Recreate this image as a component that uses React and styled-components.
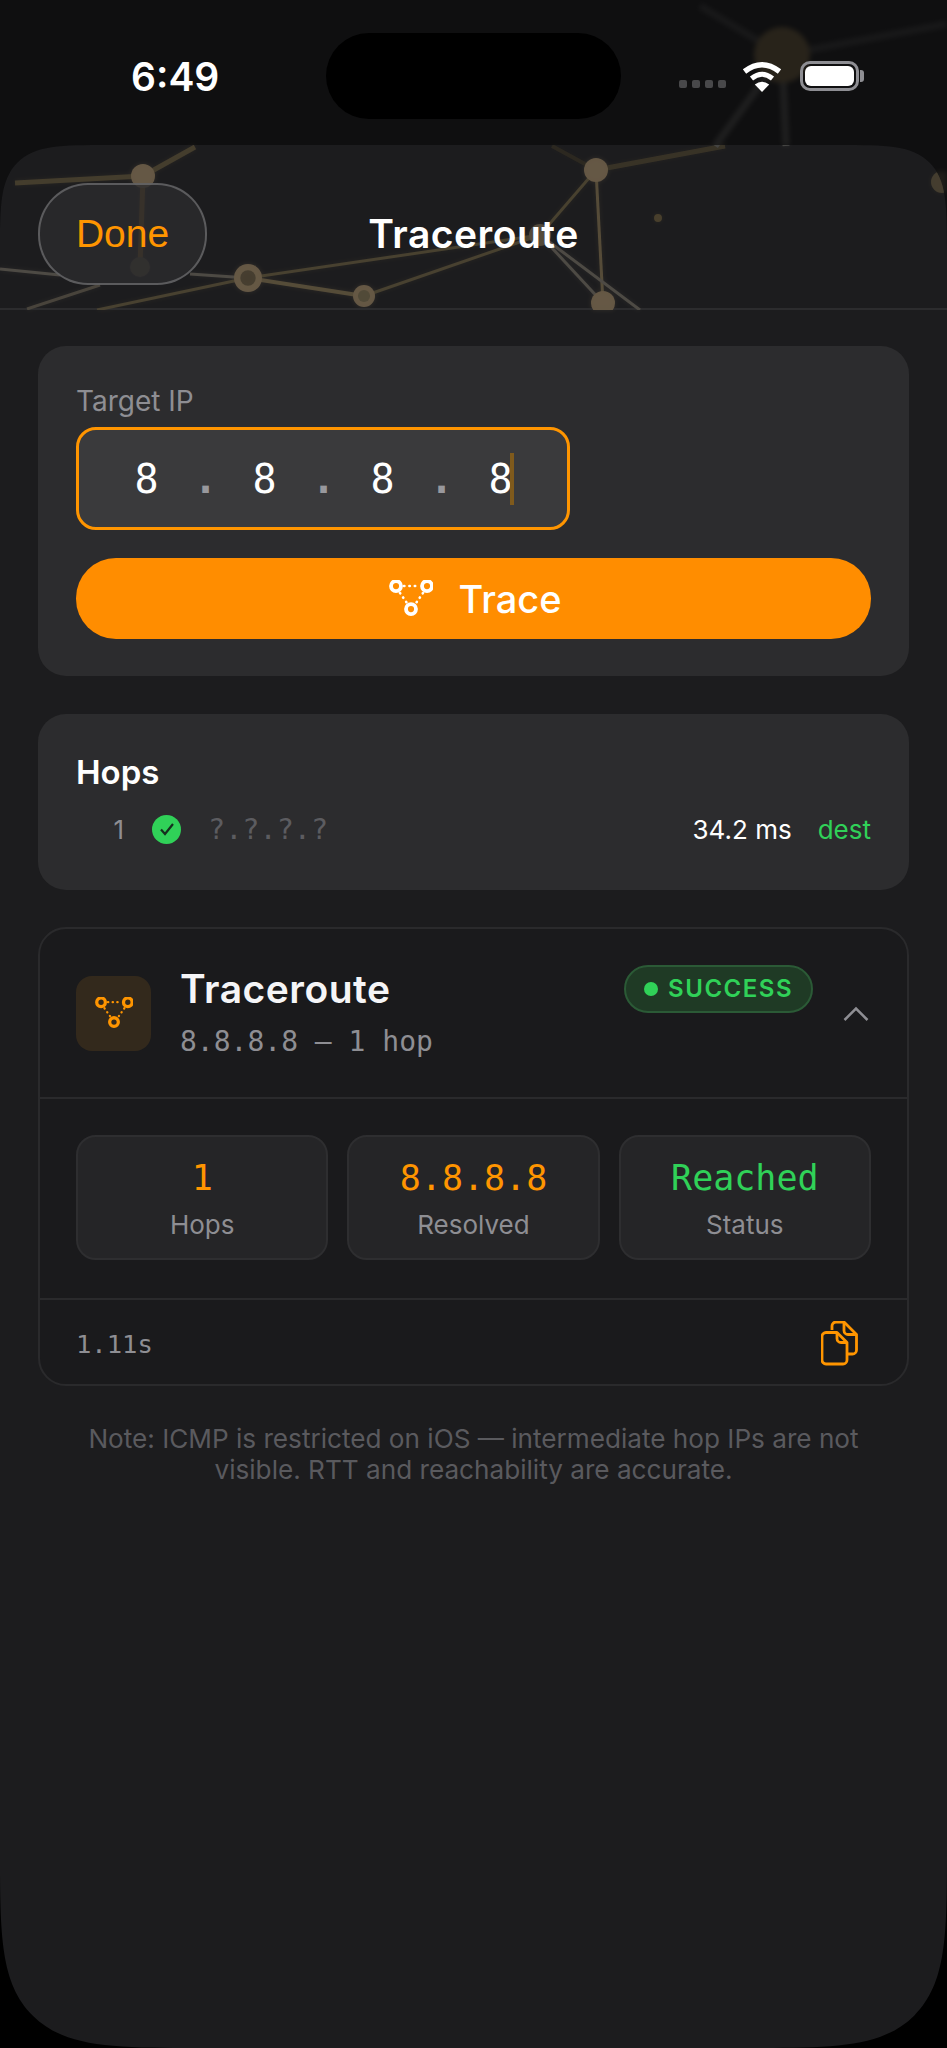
import React from 'react'
import styled, { createGlobalStyle } from 'styled-components'

const ORANGE = '#ff9500'
const GREEN = '#30d158'
const MONO = '"DejaVu Sans Mono", "Liberation Mono", monospace'

const links = [
  [15, 183, 143, 176, 5, '#4a4230'],
  [143, 176, 195, 147, 5, '#4a4230'],
  [143, 176, 140, 267, 5, '#6a4c1c'],
  [0, 269, 60, 275, 3, '#55514a'],
  [190, 274, 248, 278, 3, '#55514a'],
  [100, 285, 27, 309, 3, '#4f4a40'],
  [248, 278, 97, 310, 3, '#4f4733'],
  [248, 278, 364, 296, 4, '#5e533d'],
  [248, 278, 540, 235, 3, '#4f4733'],
  [364, 296, 540, 235, 3, '#4f4733'],
  [540, 235, 596, 170, 3, '#4f4733'],
  [596, 170, 603, 303, 3, '#5e533d'],
  [540, 235, 603, 303, 3, '#55514a'],
  [540, 235, 640, 310, 3, '#55514a'],
  [596, 170, 725, 146, 5, '#3d3729'],
  [596, 170, 552, 146, 4, '#2f2b22'],
  [782, 55, 715, 146, 7, '#4a4a48'],
  [782, 55, 786, 146, 7, '#4a4a48'],
  [782, 55, 700, 6, 7, '#333'],
  [782, 55, 947, 24, 7, '#333'],
]

const nodes = [
  [143, 176, 12, '#6f604a'],
  [140, 267, 10, '#4c4434'],
  [248, 278, 14, '#6f604a', '#4b4232'],
  [364, 296, 11, '#6f604a', '#58503c'],
  [540, 235, 11, '#5a5040'],
  [596, 170, 12, '#6f604a'],
  [603, 303, 12, '#6f604a'],
  [658, 218, 4, '#4f452f'],
  [942, 182, 11, '#4a4232'],
  [782, 55, 28, '#6a5836'],
]

function Network({ $dim, $shift }) {
  return (
    <NetworkSvg $dim={$dim} $shift={$shift} width="947" height="310" viewBox="0 0 947 310">
      {links.map((l, i) => (
        <line key={i} x1={l[0]} y1={l[1]} x2={l[2]} y2={l[3]} stroke={l[5]} strokeWidth={l[4]} />
      ))}
      {nodes.map((n, i) => (
        <g key={i}>
          <circle cx={n[0]} cy={n[1]} r={n[2]} fill={n[3]} />
          {n[4] && <circle cx={n[0]} cy={n[1]} r={n[2] * 0.55} fill={n[4]} />}
        </g>
      ))}
    </NetworkSvg>
  )
}

function TraceIcon({ size, color }) {
  return (
    <svg width={size} height={size * 0.82} viewBox="0 0 44 36" fill="none" stroke={color}>
      <circle cx="7" cy="6" r="5" strokeWidth="3.8" />
      <circle cx="38" cy="6" r="5" strokeWidth="3.8" />
      <circle cx="22" cy="29" r="5" strokeWidth="3.8" />
      <g strokeWidth="2.6" strokeLinecap="round" strokeDasharray="0.4 5">
        <line x1="15" y1="6" x2="31" y2="6" />
        <line x1="11" y1="13" x2="18" y2="23" />
        <line x1="34" y1="13" x2="27" y2="23" />
      </g>
    </svg>
  )
}

function App() {
  return (
    <Phone>
      <GlobalStyle />
      <StatusBar>
        <Network $dim />
        <Time>6:49</Time>
        <Island />
        <StatusIcons>
          <Signal>
            <i /><i /><i /><i />
          </Signal>
          <svg width="40" height="31" viewBox="0 0 40 31" fill="none">
            <path d="M2.5 10.5 Q20 -3 37.5 10.5" stroke="#fff" strokeWidth="5.5" />
            <path d="M9.5 17.5 Q20 9 30.5 17.5" stroke="#fff" strokeWidth="5" />
            <path d="M20 31 L12.8 23.5 Q20 18 27.2 23.5 Z" fill="#fff" />
          </svg>
          <Battery>
            <BatteryFill />
          </Battery>
        </StatusIcons>
      </StatusBar>

      <Sheet>
        <Header>
          <Network $shift={-145} />
          <DoneButton>Done</DoneButton>
          <HeaderTitle>Traceroute</HeaderTitle>
        </Header>

        <Content>
          <Card $pad="38px 38px 37px">
            <FieldLabel>Target IP</FieldLabel>
            <IpField>
              <IpCell>8</IpCell>
              <IpDot>.</IpDot>
              <IpCell>8</IpCell>
              <IpDot>.</IpDot>
              <IpCell>8</IpCell>
              <IpDot>.</IpDot>
              <IpCell>8</IpCell>
              <Caret />
            </IpField>
            <TraceButton>
              <TraceIcon size={44} color="#fff" />
              Trace
            </TraceButton>
          </Card>

          <Card $pad="35px 38px 0" $height="176px">
            <CardTitle>Hops</CardTitle>
            <HopRow>
              <HopNumber>1</HopNumber>
              <CheckDot>
                <svg width="16" height="14" viewBox="0 0 16 14" fill="none">
                  <path d="M2 7.5 L6 12 L14 2" stroke="#16301f" strokeWidth="2.2" />
                </svg>
              </CheckDot>
              <HopAddress>?.?.?.?</HopAddress>
              <HopTime>34.2 ms</HopTime>
              <HopTag>dest</HopTag>
            </HopRow>
          </Card>

          <ResultCard>
            <ResultHeader>
              <IconBox>
                <TraceIcon size={38} color={ORANGE} />
              </IconBox>
              <ResultBody>
                <ResultTop>
                  <ResultTitle>Traceroute</ResultTitle>
                  <Badge>
                    <BadgeDot />
                    SUCCESS
                  </Badge>
                </ResultTop>
                <ResultSub>8.8.8.8 — 1 hop</ResultSub>
              </ResultBody>
              <svg width="26" height="15" viewBox="0 0 26 15" fill="none">
                <path d="M1.5 14 L13 2.5 L24.5 14" stroke="#8e8e93" strokeWidth="2.5" />
              </svg>
            </ResultHeader>

            <Stats>
              <Stat>
                <StatValue $color={ORANGE}>1</StatValue>
                <StatLabel>Hops</StatLabel>
              </Stat>
              <Stat>
                <StatValue $color={ORANGE}>8.8.8.8</StatValue>
                <StatLabel>Resolved</StatLabel>
              </Stat>
              <Stat>
                <StatValue $color={GREEN}>Reached</StatValue>
                <StatLabel>Status</StatLabel>
              </Stat>
            </Stats>

            <ResultFooter>
              <Duration>1.11s</Duration>
              <svg width="37" height="45" viewBox="0 0 37 45" fill="none" stroke={ORANGE} strokeWidth="2.8" strokeLinejoin="round">
                <path d="M11 9 V5 a4 4 0 0 1 4 -4 h8 l12.5 12.5 V29 a4 4 0 0 1 -4 4 h-5" />
                <path d="M23 1 v8.500 a4 4 0 0 0 4 4 h8.500" />
                <path d="M5 11.500 h11 l10 10 V39 a4 4 0 0 1 -4 4 H5 a4 4 0 0 1 -4 -4 V15.500 a4 4 0 0 1 4 -4 z" />
                <path d="M16 11.500 v6 a4 4 0 0 0 4 4 h6" />
              </svg>
            </ResultFooter>
          </ResultCard>

          <Note>Note: ICMP is restricted on iOS — intermediate hop IPs are not visible. RTT and reachability are accurate.</Note>
        </Content>
      </Sheet>
    </Phone>
  )
}

export default App

const GlobalStyle = createGlobalStyle`
  html, body {
    margin: 0;
    padding: 0;
    background: #000;
  }

  * {
    box-sizing: border-box;
  }
`

const Phone = styled.div`
  width: 947px;
  height: 2048px;
  display: flex;
  flex-direction: column;
  overflow: hidden;
  background: linear-gradient(#0f0f10 0, #0f0f10 400px, #000 400px);
  font-family: Inter, "Liberation Sans", sans-serif;
`

const NetworkSvg = styled.svg`
  position: absolute;
  left: 0;
  top: ${p => p.$shift || 0}px;
  opacity: ${p => (p.$dim ? 0.28 : 0.85)};
  filter: blur(${p => (p.$dim ? 2.5 : 0.7)}px);
`

const StatusBar = styled.div`
  position: relative;
  height: 145px;
  flex: none;
  display: grid;
  grid-template-columns: 326px 295px 1fr;
  padding-top: 33px;
`

const Time = styled.div`
  position: relative;
  padding-left: 131px;
  height: 86px;
  line-height: 87px;
  font-size: 39px;
  font-weight: 600;
  color: #fff;
`

const Island = styled.div`
  position: relative;
  height: 86px;
  border-radius: 43px;
  background: #000;
`

const StatusIcons = styled.div`
  position: relative;
  height: 60px;
  display: flex;
  align-items: center;
  padding: 26px 0 0 58px;
  gap: 18px;
`

const Signal = styled.div`
  display: flex;
  gap: 5px;
  margin: 16px -2px 0 0;

  i {
    width: 8px;
    height: 8px;
    border-radius: 2px;
    background: #48484a;
  }
`

const Battery = styled.div`
  position: relative;
  width: 59px;
  height: 30px;
  border: 3px solid #8e8e93;
  border-radius: 10px;
  padding: 2px;

  &::after {
    content: '';
    position: absolute;
    right: -8px;
    top: 6px;
    width: 4px;
    height: 12px;
    border-radius: 0 3px 3px 0;
    background: #8e8e93;
  }
`

const BatteryFill = styled.div`
  height: 100%;
  border-radius: 6px;
  background: #fff;
`

const Sheet = styled.div`
  flex: 1;
  display: flex;
  flex-direction: column;
  background: #1c1c1e;
  border-radius: 110px 110px 205px 205px;
  corner-shape: squircle;
  overflow: hidden;
`

const Header = styled.div`
  position: relative;
  height: 165px;
  flex: none;
  display: grid;
  grid-template-columns: 1fr auto 1fr;
  align-items: center;
  padding: 14px 38px 0;
  border-bottom: 2px solid #2c2c2e;
`

const DoneButton = styled.button`
  position: relative;
  width: 169px;
  height: 102px;
  margin-bottom: 0;
  border: 2px solid rgba(120, 120, 122, 0.65);
  border-radius: 50px;
  background: rgba(44, 44, 46, 0.78);
  color: ${ORANGE};
  font-family: "Liberation Sans", sans-serif;
  font-size: 39px;
`

const HeaderTitle = styled.div`
  position: relative;
  font-size: 39px;
  font-weight: 600;
  letter-spacing: 0.5px;
  color: #fff;
`

const Content = styled.div`
  display: flex;
  flex-direction: column;
  padding: 36px 38px 0;
  gap: 38px;
`

const Card = styled.div`
  height: ${p => p.$height || 'auto'};
  padding: ${p => p.$pad};
  border-radius: 28px;
  background: #2c2c2e;
`

const FieldLabel = styled.div`
  height: 34px;
  line-height: 34px;
  font-size: 28px;
  color: #8e8e93;
`

const IpField = styled.div`
  display: flex;
  align-items: center;
  width: 494px;
  height: 103px;
  margin-top: 9px;
  padding-left: 38px;
  border: 3px solid ${ORANGE};
  border-radius: 20px;
  background: #3a3a3c;
  font-family: ${MONO};
  font-size: 40px;
  color: #fff;
`

const IpCell = styled.span`
  width: 59px;
  text-align: center;
`

const IpDot = styled(IpCell)`
  color: #98989d;
  font-weight: 700;
`

const Caret = styled.span`
  width: 4px;
  height: 52px;
  margin-left: -20px;
  background: #7f5a1c;
`

const TraceButton = styled.button`
  display: flex;
  align-items: center;
  justify-content: center;
  gap: 25px;
  width: 100%;
  height: 81px;
  margin-top: 28px;
  padding-left: 10px;
  border: none;
  border-radius: 40px;
  background: #ff8d00;
  color: #fff;
  font-family: inherit;
  font-size: 38px;
  font-weight: 500;
`

const CardTitle = styled.div`
  height: 46px;
  line-height: 46px;
  font-size: 33px;
  font-weight: 600;
  color: #fff;
`

const HopRow = styled.div`
  display: flex;
  align-items: center;
  height: 34px;
  margin-top: 17px;
  font-size: 26px;
`

const HopNumber = styled.span`
  width: 30px;
  margin-left: 18px;
  text-align: right;
  color: #8e8e93;
`

const CheckDot = styled.span`
  display: flex;
  align-items: center;
  justify-content: center;
  width: 29px;
  height: 29px;
  margin-left: 28px;
  border-radius: 50%;
  background: ${GREEN};
`

const HopAddress = styled.span`
  margin-left: 27px;
  margin-right: auto;
  font-family: ${MONO};
  font-size: 28.500px;
  color: #5c5c60;
`

const HopTime = styled.span`
  color: #fff;
`

const HopTag = styled.span`
  margin-left: 26px;
  color: ${GREEN};
`

const ResultCard = styled.div`
  margin-top: -1px;
  border: 2px solid #2a2a2c;
  border-radius: 28px;
  background: #1a1a1c;
`

const ResultHeader = styled.div`
  display: flex;
  align-items: center;
  height: 170px;
  padding: 0 38px 0 36px;
  border-bottom: 2px solid #2a2a2c;
`

const IconBox = styled.div`
  display: flex;
  align-items: center;
  justify-content: center;
  flex: none;
  width: 75px;
  height: 75px;
  border-radius: 16px;
  background: #33291c;
`

const ResultBody = styled.div`
  flex: 1;
  margin: 0 30px 0 29px;
  padding-bottom: 3px;
`

const ResultTop = styled.div`
  display: flex;
  align-items: center;
  justify-content: space-between;
  height: 48px;
`

const ResultTitle = styled.div`
  font-size: 39px;
  font-weight: 600;
  letter-spacing: 0.5px;
  color: #f5f5f7;
`

const Badge = styled.div`
  display: flex;
  align-items: center;
  gap: 10px;
  height: 48px;
  padding: 0 18px;
  border: 2px solid #2b5a36;
  border-radius: 24px;
  background: #1f3a25;
  color: ${GREEN};
  font-size: 24px;
  font-weight: 600;
  letter-spacing: 1.5px;
`

const BadgeDot = styled.span`
  width: 14px;
  height: 14px;
  border-radius: 50%;
  background: ${GREEN};
`

const ResultSub = styled.div`
  margin-top: 12px;
  line-height: 34px;
  font-family: ${MONO};
  font-size: 28px;
  color: #8e8e93;
`

const Stats = styled.div`
  display: grid;
  grid-template-columns: repeat(3, 1fr);
  gap: 19px;
  padding: 36px 36px 38px;
  border-bottom: 2px solid #2a2a2c;
`

const Stat = styled.div`
  display: flex;
  flex-direction: column;
  align-items: center;
  height: 125px;
  padding-top: 18px;
  border: 2px solid #2e2e30;
  border-radius: 20px;
  background: #252527;
`

const StatValue = styled.div`
  line-height: 46px;
  font-family: ${MONO};
  font-size: 35px;
  color: ${p => p.$color};
`

const StatLabel = styled.div`
  margin-top: 7px;
  line-height: 34px;
  font-size: 26px;
  color: #8e8e93;
`

const ResultFooter = styled.div`
  display: flex;
  align-items: center;
  justify-content: space-between;
  height: 84px;
  padding: 3px 49px 0 36px;
`

const Duration = styled.div`
  font-family: ${MONO};
  font-size: 25.500px;
  color: #8e8e93;
`

const Note = styled.p`
  margin: 0;
  margin-top: -1px;
  padding: 0 38px;
  line-height: 31px;
  text-align: center;
  font-size: 26.150px;
  color: #5a5a5e;
`
